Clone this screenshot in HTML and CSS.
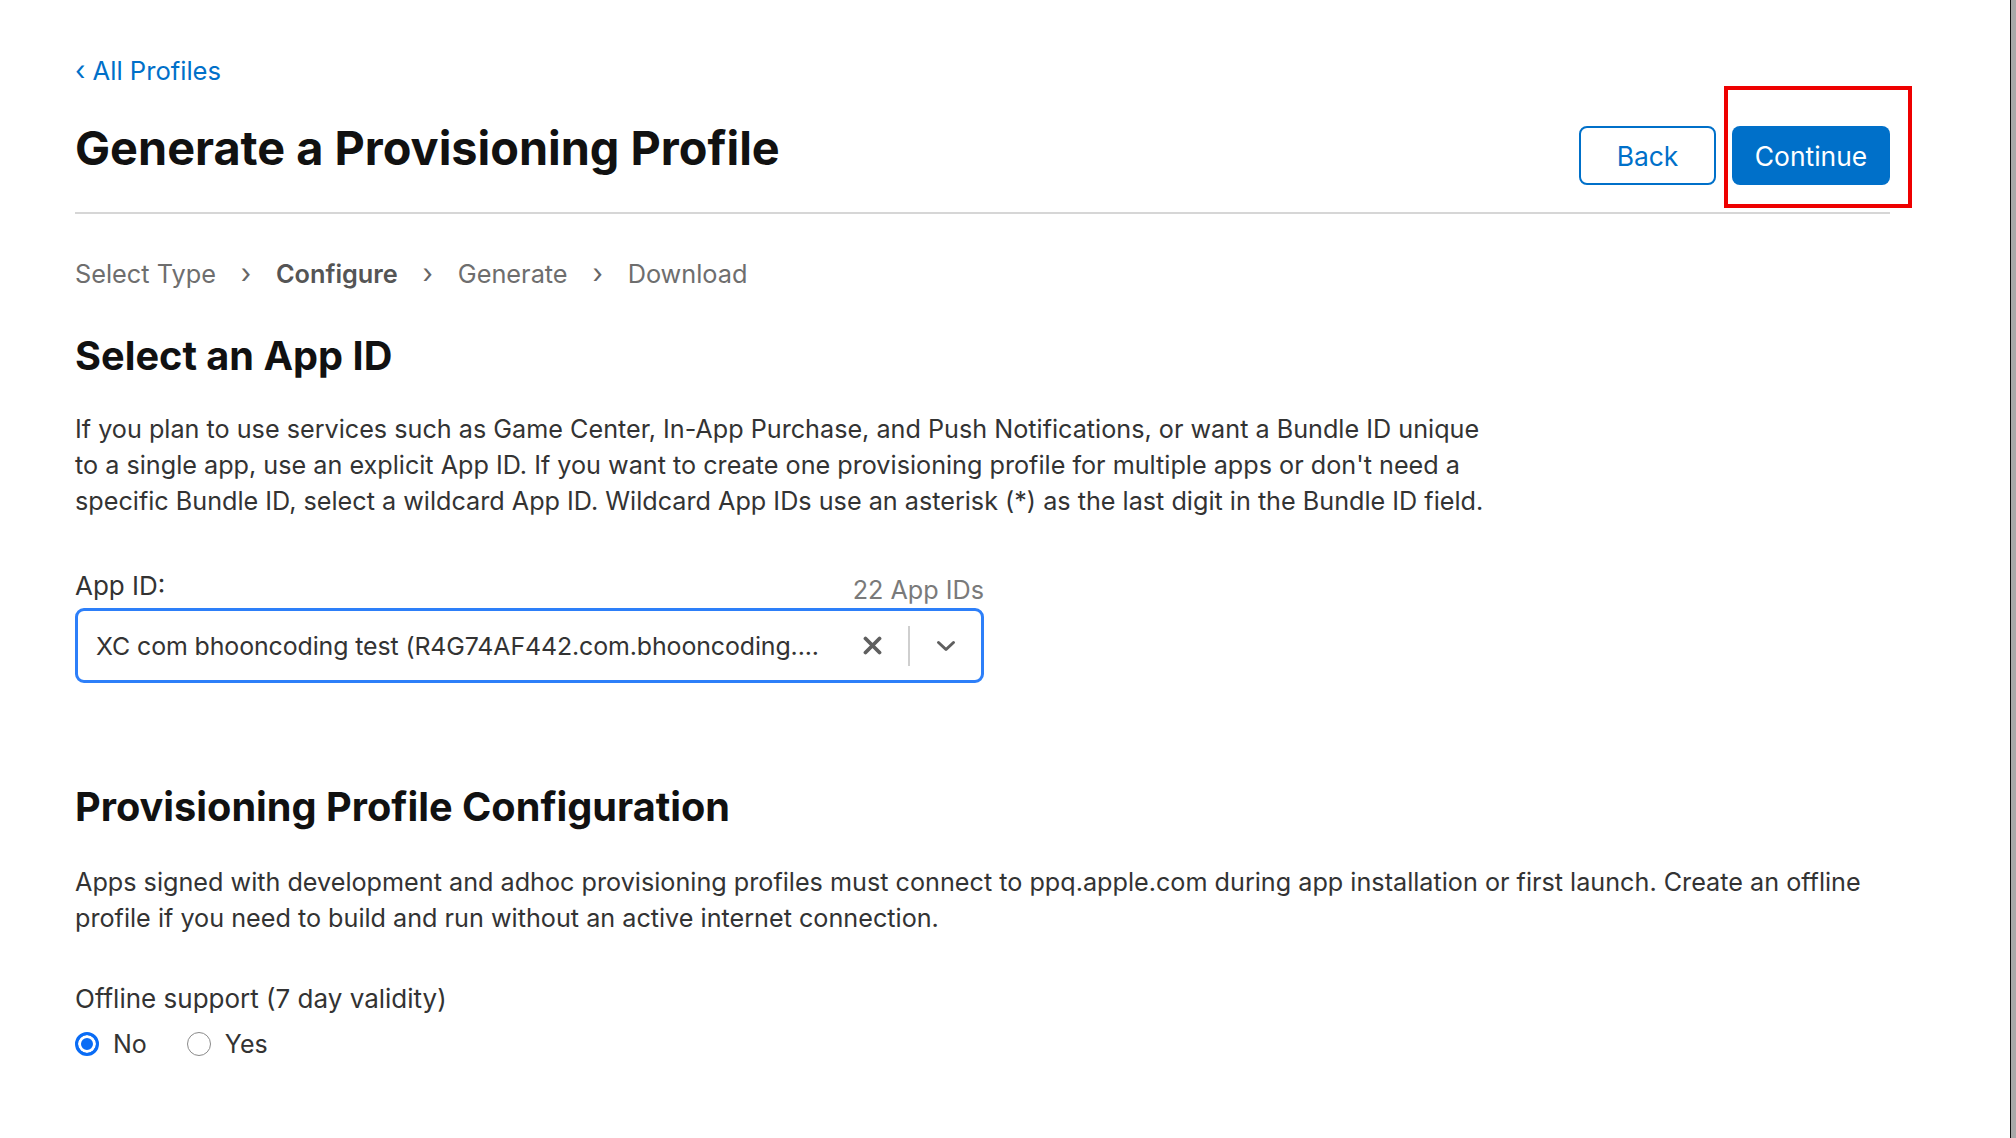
FILE: index.html
```html
<!DOCTYPE html>
<html lang="en">
<head>
<meta charset="utf-8">
<title>Generate a Provisioning Profile</title>
<link rel="stylesheet" href="styles.css">
</head>
<body>
<div class="page">
  <main class="content">
    <a class="back-link" href="#"><span class="lt">&#8249;</span> All Profiles</a>
    <div class="head-row">
      <h1 class="title">Generate a Provisioning Profile</h1>
      <div class="actions">
        <button class="btn btn-outline">Back</button>
        <div class="continue-wrap">
          <button class="btn btn-primary">Continue</button>
          <span class="highlight"></span>
        </div>
      </div>
    </div>

    <nav class="steps">
      <span class="step">Select Type</span>
      <span class="sep">&#8250;</span>
      <span class="step current">Configure</span>
      <span class="sep">&#8250;</span>
      <span class="step">Generate</span>
      <span class="sep">&#8250;</span>
      <span class="step">Download</span>
    </nav>

    <h2 class="section-title">Select an App ID</h2>
    <p class="para">If you plan to use services such as Game Center, In-App Purchase, and Push Notifications, or want a Bundle ID unique<br>to a single app, use an explicit App ID. If you want to create one provisioning profile for multiple apps or don't need a<br>specific Bundle ID, select a wildcard App ID. Wildcard App IDs use an asterisk (*) as the last digit in the Bundle ID field.</p>

    <div class="field">
      <div class="field-head">
        <label class="field-label">App ID:</label>
        <span class="count">22 App IDs</span>
      </div>
      <div class="select">
        <span class="select-value">XC com bhooncoding test (R4G74AF442.com.bhooncoding....</span>
        <span class="select-clear">
          <svg width="19" height="19" viewBox="0 0 19 19"><path d="M2.5 2.5 L16.5 16.5 M16.5 2.5 L2.5 16.5" stroke="#5f5f5f" stroke-width="3.8" stroke-linecap="round"/></svg>
        </span>
        <span class="select-divider"></span>
        <span class="select-arrow">
          <svg width="20" height="12" viewBox="0 0 20 12"><path d="M2.5 2.5 L10 9.5 L17.5 2.5" fill="none" stroke="#5f5f5f" stroke-width="3" stroke-linecap="round" stroke-linejoin="round"/></svg>
        </span>
      </div>
    </div>

    <h2 class="section-title second">Provisioning Profile Configuration</h2>
    <p class="para para2">Apps signed with development and adhoc provisioning profiles must connect to ppq.apple.com during app installation or first launch. Create an offline<br>profile if you need to build and run without an active internet connection.</p>

    <div class="offline-label">Offline support (7 day validity)</div>
    <div class="radios">
      <label class="radio"><span class="dot checked"></span>No</label>
      <label class="radio"><span class="dot"></span>Yes</label>
    </div>
  </main>
  <div class="edge"></div>
</div>
</body>
</html>
```

FILE: styles.css
```css
* { box-sizing: border-box; }
html, body { margin: 0; padding: 0; background: #ffffff; }
body {
  font-family: Inter, "Noto Sans", "Liberation Sans", sans-serif;
  color: #333333;
  height: 1138px;
  overflow: hidden;
}
.page {
  display: flex;
  height: 1138px;
}
.content {
  flex: 1;
  padding: 56px 0 0 75px;
}
.edge {
  width: 6px;
  border-left: 1px solid #111;
  background: #a9a9a9;
}
.back-link {
  display: block;
  font-size: 25.6px;
  line-height: 30px;
  color: #0070c9;
  text-decoration: none;
}
.back-link .lt { font-size: 27px; }
.head-row {
  width: 1815px;
  display: flex;
  justify-content: space-between;
  align-items: flex-start;
  border-bottom: 2px solid #d6d6d6;
  margin-top: 34px;
}
.title {
  margin: 0 0 36px;
  font-size: 46.8px;
  line-height: 56px;
  font-weight: 700;
  color: #111111;
  letter-spacing: 0;
}
.actions {
  display: flex;
  gap: 16px;
  margin-top: 6px;
}
.btn {
  font-family: inherit;
  font-size: 26.4px;
  height: 59px;
  border-radius: 8px;
  cursor: pointer;
  padding: 0;
}
.btn-outline {
  width: 137px;
  background: #fff;
  color: #0070c9;
  border: 2px solid #0070c9;
}
.btn-primary {
  width: 158px;
  background: #0070c9;
  color: #fff;
  border: none;
}
.continue-wrap { position: relative; }
.highlight {
  position: absolute;
  left: -8px;
  top: -40px;
  width: 188px;
  height: 122px;
  border: 4px solid #ee0000;
  pointer-events: none;
}
.steps {
  display: flex;
  align-items: center;
  gap: 24px;
  margin-top: 45px;
  font-size: 25.3px;
  line-height: 30px;
  color: #6e6e6e;
}
.step.current { font-weight: 600; color: #555; }
.sep { font-size: 27px; color: #666; width: 12px; text-align: center; }
.section-title {
  margin: 44px 0 0;
  font-size: 39.7px;
  line-height: 46px;
  font-weight: 700;
  color: #111111;
  letter-spacing: 0;
}
.section-title.second { margin-top: 101px; }
.para {
  margin: 32px 0 0;
  font-size: 25.2px;
  line-height: 36px;
  color: #333333;
}
.para2 { margin-top: 34px; }
.field { width: 909px; margin-top: 52px; }
.field-head {
  display: flex;
  justify-content: space-between;
  align-items: flex-end;
  height: 30px;
}
.field-label { font-size: 26px; line-height: 30px; color: #333; }
.count { font-size: 25.2px; line-height: 30px; color: #7a7a7a; position: relative; top: 4px; }
.select {
  margin-top: 7px;
  height: 75px;
  border: 3px solid #2d7ff9;
  border-radius: 9px;
  display: flex;
  align-items: center;
  padding-left: 18px;
}
.select-value {
  flex: 1;
  min-width: 0;
  font-size: 24.9px;
  letter-spacing: -0.1px;
  color: #333;
  white-space: nowrap;
}
.select-clear {
  width: 72px;
  flex: none;
  display: flex;
  justify-content: center;
}
.select-divider {
  width: 2px;
  flex: none;
  height: 40px;
  background: #cfcfcf;
}
.select-arrow {
  width: 71px;
  flex: none;
  display: flex;
  justify-content: center;
}
.offline-label {
  margin-top: 48px;
  font-size: 26px;
  line-height: 30px;
  color: #333;
}
.radios {
  display: flex;
  gap: 40px;
  margin-top: 15px;
}
.radio {
  display: flex;
  align-items: center;
  gap: 14px;
  font-size: 25px;
  line-height: 30px;
  color: #333;
}
.dot {
  width: 24px;
  height: 24px;
  border-radius: 50%;
  border: 1.5px solid #8a8a8a;
  background: #fff;
}
.dot.checked {
  border: 3px solid #0a6cf5;
  background: #0a6cf5;
  box-shadow: inset 0 0 0 3px #fff;
}
```
